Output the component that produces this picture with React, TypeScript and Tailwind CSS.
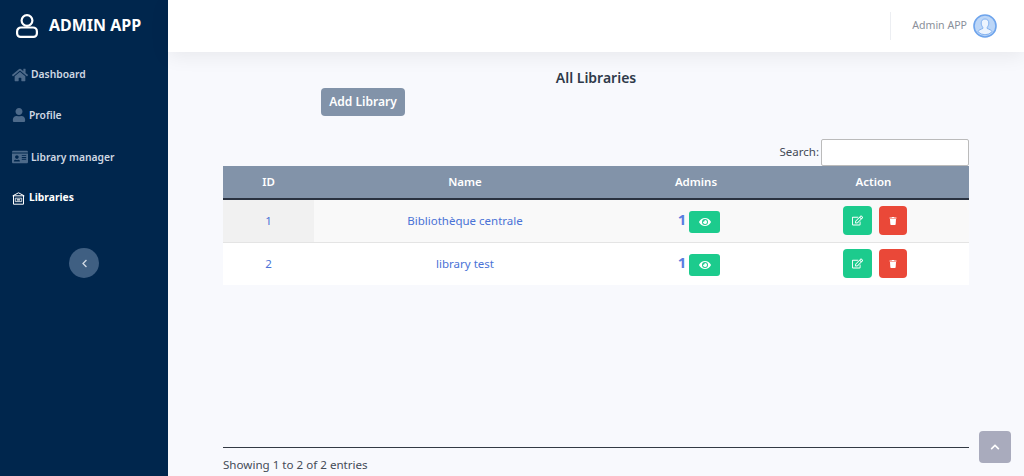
import { FaHome, FaUser, FaIdCard, FaEye, FaRegEdit, FaTrash, FaChevronLeft, FaChevronUp } from 'react-icons/fa'

const font = { fontFamily: '"Noto Sans", sans-serif' }

const libraries = [
  { id: 1, name: 'Bibliothèque centrale', rowClass: 'bg-[#f9f9f9]', idClass: 'bg-[#f1f1f1]' },
  { id: 2, name: 'library test', rowClass: 'bg-white', idClass: 'bg-white' },
]

function LogoUser() {
  return (
    <svg width="22" height="24" viewBox="0 0 22 24" fill="none" stroke="white" strokeWidth="2.2">
      <circle cx="11" cy="6.500" r="5.400" />
      <path d="M5 13.500h12a3.900 3.900 0 0 1 3.900 3.900v2.100a3.400 3.400 0 0 1-3.400 3.400h-13a3.400 3.400 0 0 1-3.400-3.400v-2.100A3.900 3.900 0 0 1 5 13.500z" />
    </svg>
  )
}

function BankIcon() {
  return (
    <svg width="13" height="13" viewBox="0 0 13 13" fill="none" stroke="white" strokeWidth="1">
      <path d="M.8 3.800 6.500.8l5.700 3z" />
      <path d="M1.500 3.800v8.400h10V3.800" />
      <path d="M3.300 6.200h6.400v3.400H3.300z" strokeWidth="0.800" />
      <path d="M4.800 7.900h3.400" strokeWidth="1.300" />
    </svg>
  )
}

function Avatar() {
  return (
    <svg width="24" height="24" viewBox="0 0 24 24">
      <circle cx="12" cy="12" r="11" fill="#bcd6f7" stroke="#6ea4ec" strokeWidth="1.600" />
      <path
        d="M12 5c-2.500 0-3.800 1.800-3.800 4 0 1.700.7 3.200 1.600 4.200v1.300c-1.800.8-4.300 1.400-4.900 3.200a9.800 9.800 0 0 0 14.200 0c-.6-1.800-3.100-2.400-4.900-3.200v-1.300c.9-1 1.600-2.500 1.600-4.200 0-2.200-1.300-4-3.800-4z"
        fill="#ecf4fe"
        stroke="#6ea4ec"
        strokeWidth="0.800"
      />
    </svg>
  )
}

function Sidebar() {
  return (
    <aside className="flex w-[168px] shrink-0 flex-col bg-[#00264d]">
      <div className="flex h-[52px] items-center gap-[11px] pl-[16px]">
        <LogoUser />
        <span className="-mt-[2px] text-[16px] font-bold text-white">ADMIN APP</span>
      </div>
      <nav className="flex flex-col pl-3 text-[10.300px] font-semibold text-[#cfd8e3]">
        <a className="mt-[11px] flex h-6 items-center gap-[3px]">
          <FaHome className="-mt-px text-[16px] text-[#4d6a8a]" />
          Dashboard
        </a>
        <a className="mt-[17px] flex h-6 items-center gap-[3px]">
          <FaUser className="-mt-[3px] text-[14px] text-[#4d6a8a]" />
          Profile
        </a>
        <a className="mt-[18px] flex h-6 items-center gap-[3px]">
          <FaIdCard className="-mt-[3px] text-[16px] text-[#4d6a8a]" />
          Library manager
        </a>
        <a className="mt-[16px] flex h-6 items-center gap-1 font-bold text-white">
          <BankIcon />
          Libraries
        </a>
      </nav>
      <button className="mx-auto mt-[38px] flex h-[30px] w-[30px] items-center justify-center rounded-full bg-[#3f5f82] text-[#cfd8e3]">
        <FaChevronLeft className="text-[9px]" />
      </button>
    </aside>
  )
}

function Header() {
  return (
    <header className="flex h-[52px] shrink-0 items-center justify-end bg-white pr-[27px] shadow-[0_4px_20px_rgba(0,0,0,0.07)]">
      <div className="h-[28px] w-px bg-[#eceef2]" />
      <span className="ml-[21px] text-[10.600px] text-[#8a8f9a]">Admin APP</span>
      <span className="ml-[6px]">
        <Avatar />
      </span>
    </header>
  )
}

export default function App() {
  return (
    <div className="relative flex h-[476px] w-[1024px] overflow-hidden bg-[#f8f9fd]" style={font}>
      <Sidebar />
      <main className="flex min-w-0 flex-1 flex-col">
        <Header />
        <div className="flex flex-1 flex-col pl-[55px] pr-[55px]">
          <h1 className="mt-[17px] text-center text-[14px] font-semibold leading-[18px] text-[#2f3a4a]">All Libraries</h1>
          <div className="pl-[98px]">
            <button className="mt-[1px] h-[28px] w-[84px] rounded-[4px] bg-[#8293a9] text-[12px] font-semibold text-white">
              Add Library
            </button>
          </div>
          <div className="mt-[22px] flex h-[28px] items-center justify-end text-[11.500px] text-[#444b57]">
            <label>Search:</label>
            <input className="ml-[2px] h-[27px] w-[148px] rounded-[2px] border border-[#bbb] bg-white" />
          </div>
          <table className="w-[746px] table-fixed border-collapse text-[11.500px]">
            <thead>
              <tr className="h-[33px] border-b-2 border-[#2a3240] bg-[#8293a9] text-white">
                <th className="w-[91px] font-semibold">ID</th>
                <th className="w-[302px] font-semibold">Name</th>
                <th className="w-[160px] font-semibold">Admins</th>
                <th className="pl-[2px] font-semibold">Action</th>
              </tr>
            </thead>
            <tbody className="text-[#4a72d6]">
              {libraries.map((lib, i) => (
                <tr key={lib.id} className={`h-[43px] ${i === 0 ? 'border-b border-[#e4e4e4]' : ''} ${lib.rowClass}`}>
                  <td className={`text-center ${lib.idClass}`}>{lib.id}</td>
                  <td className="text-center">{lib.name}</td>
                  <td className="pl-[6px]">
                    <div className="flex items-center justify-center gap-[3px]">
                      <span className="-mt-[3px] text-[15px] font-bold text-[#5a7de0]">1</span>
                      <button className="mt-[2px] flex h-[22px] w-[31px] items-center justify-center rounded-[3px] bg-[#1ccb8d] text-white">
                        <FaEye className="text-[12px]" />
                      </button>
                    </div>
                  </td>
                  <td className="pl-[4px]">
                    <div className="flex items-center justify-center gap-[7px]">
                      <button className="flex h-[29px] w-[29px] items-center justify-center rounded-[4px] bg-[#1ccb8d] text-white">
                        <FaRegEdit className="text-[11px]" />
                      </button>
                      <button className="flex h-[29px] w-[28px] items-center justify-center rounded-[4px] bg-[#ea4838] text-white">
                        <FaTrash className="text-[8px]" />
                      </button>
                    </div>
                  </td>
                </tr>
              ))}
            </tbody>
          </table>
          <div className="mt-auto border-t border-[#333a44] pb-[3px] pt-[8px] text-[11.600px] leading-[17px] text-[#444b57]">
            Showing 1 to 2 of 2 entries
          </div>
        </div>
      </main>
      <button className="absolute left-[979px] top-[431px] flex h-8 w-8 items-center justify-center rounded-[4px] bg-[#a9abbd] text-white">
        <FaChevronUp className="text-[10px]" />
      </button>
    </div>
  )
}
